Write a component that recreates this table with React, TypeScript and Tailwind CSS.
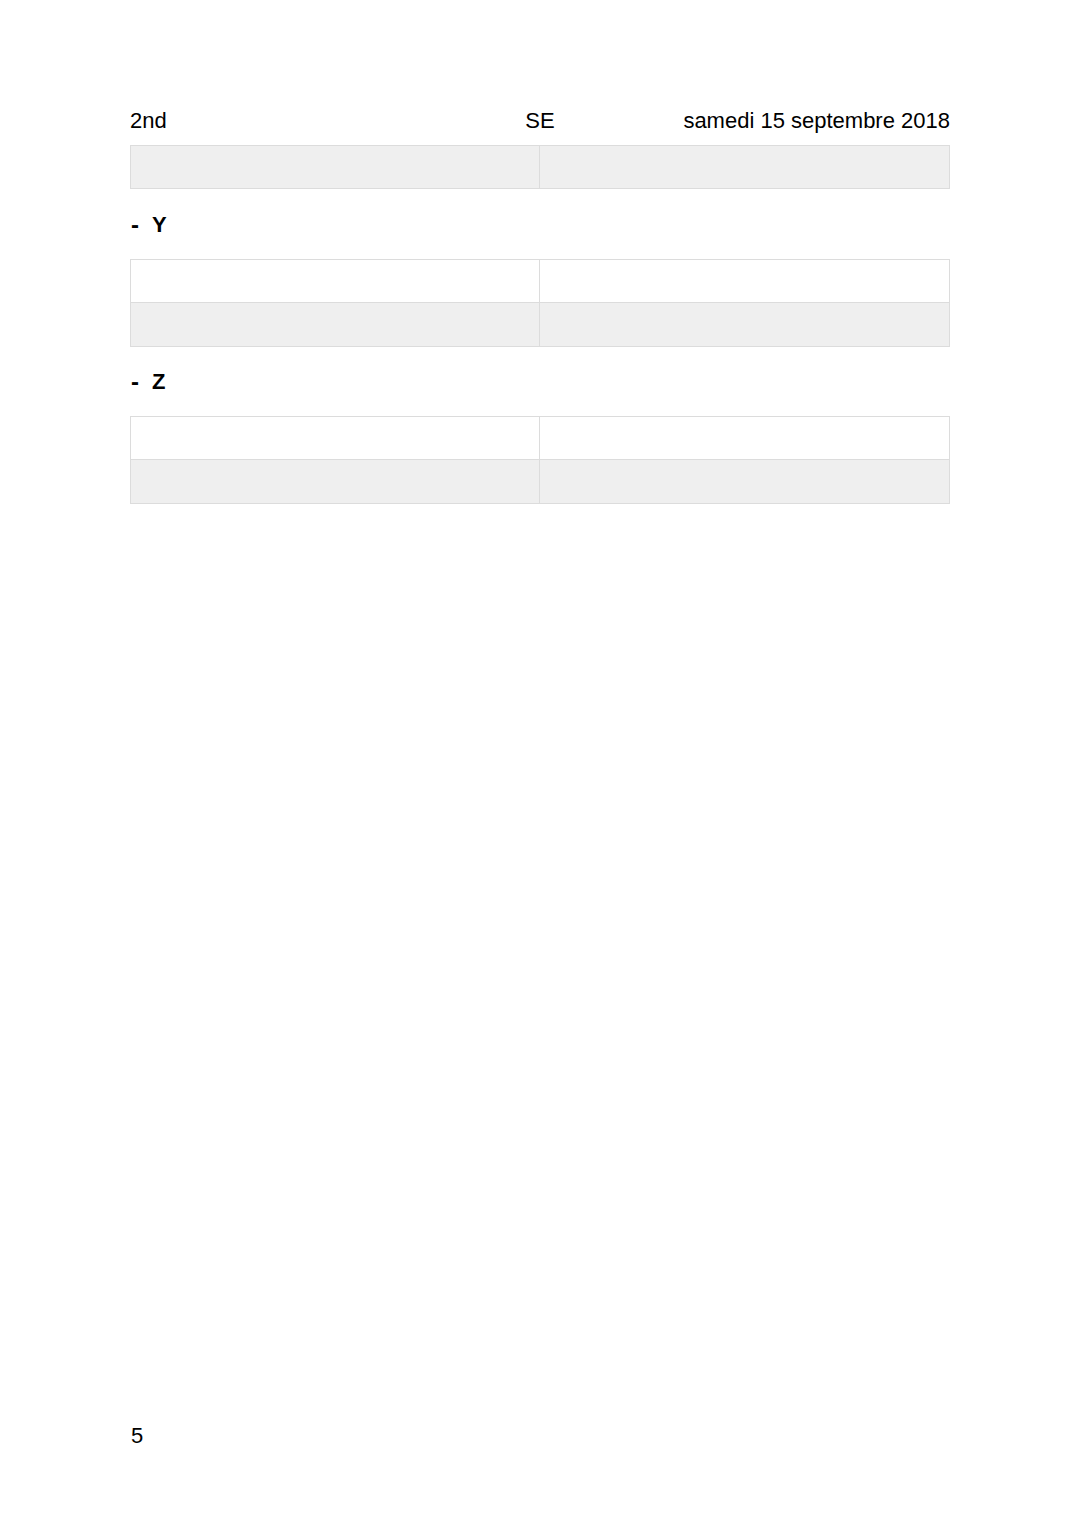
import React from 'react';

function Table({ rows }: { rows: ('white' | 'gray')[] }) {
  return (
    <div className="border border-[#dcdcdc]">
      {rows.map((tone, i) => (
        <div
          key={i}
          className={`grid grid-cols-2 ${i > 0 ? 'h-[44px] border-t border-[#dcdcdc]' : 'h-[42px]'} ${
            tone === 'gray' ? 'bg-[#efefef]' : 'bg-white'
          }`}
        >
          <div className="border-r border-[#dcdcdc]" />
          <div />
        </div>
      ))}
    </div>
  );
}

function Heading({ letter }: { letter: string }) {
  return (
    <div className="flex items-center font-bold text-[22px] leading-[24px] text-black">
      <span className="w-[22px] pl-[1px] text-[24px]">-</span>
      <span>{letter}</span>
    </div>
  );
}

export default function App() {
  return (
    <div
      className="w-[1080px] h-[1527px] bg-white text-black flex flex-col px-[130px] pt-[108px]"
      style={{ fontFamily: '"Liberation Sans", Arial, sans-serif' }}
    >
      {/* Header */}
      <div className="grid grid-cols-3 text-[22px] leading-[26px]">
        <span>2nd</span>
        <span className="text-center">SE</span>
        <span className="text-right">samedi 15 septembre 2018</span>
      </div>

      <div className="mt-[11px]">
        <Table rows={['gray']} />
      </div>

      <div className="mt-[24px]">
        <Heading letter="Y" />
      </div>
      <div className="mt-[22px]">
        <Table rows={['white', 'gray']} />
      </div>

      <div className="mt-[23px]">
        <Heading letter="Z" />
      </div>
      <div className="mt-[22px]">
        <Table rows={['white', 'gray']} />
      </div>

      {/* Page number */}
      <div className="mt-auto mb-[78px] text-[22px] leading-[26px] pl-[1px]">5</div>
    </div>
  );
}
